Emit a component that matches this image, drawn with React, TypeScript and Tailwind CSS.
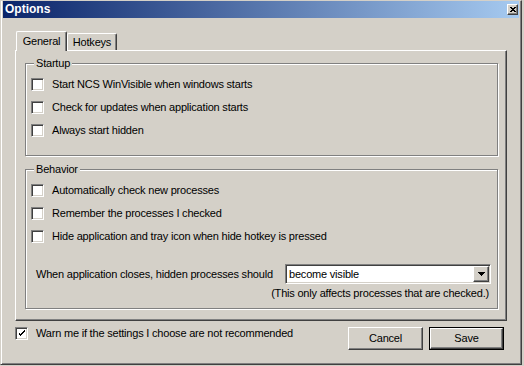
import type { ReactNode } from "react";

const raised =
  "border border-t-white border-l-white border-r-[#404040] border-b-[#404040] shadow-[inset_-1px_-1px_#808080]";
const sunken =
  "border border-t-[#808080] border-l-[#808080] border-r-white border-b-white shadow-[inset_1px_1px_#404040,inset_-1px_-1px_#d4d0c8]";

function CheckBox({ checked = false }: { checked?: boolean }) {
  return (
    <div className={`flex h-[13px] w-[13px] shrink-0 items-center justify-center bg-white ${sunken}`}>
      {checked && (
        <svg width="7" height="7" viewBox="0 0 7 7" shapeRendering="crispEdges">
          <path d="M0 2h1v3h1v1h1v-1h1v-1h1v-1h1v-1h1v-2h-1v1h-1v1h-1v1h-1v1h-1v-1h-1v-1h-1z" fill="#000" />
        </svg>
      )}
    </div>
  );
}

function CheckRow({ label, checked = false }: { label: string; checked?: boolean }) {
  return (
    <div className="flex h-[23px] items-center pl-[5px]">
      <CheckBox checked={checked} />
      <span className="ml-[8px] leading-[13px]">{label}</span>
    </div>
  );
}

function Group({ title, className, children }: { title: string; className: string; children: ReactNode }) {
  return (
    <div className={`relative border border-[#808080] shadow-[1px_1px_0_#fff,inset_1px_1px_0_#fff] ${className}`}>
      <span className="absolute left-[8px] top-[-7px] bg-[#d4d0c8] px-[2px] leading-[13px]">{title}</span>
      {children}
    </div>
  );
}

function Button({ label, primary = false }: { label: string; primary?: boolean }) {
  return (
    <div className={`h-[23px] w-[75px] ${primary ? "border border-black" : ""}`}>
      <div className={`flex h-full w-full items-center justify-center ${raised}`}>{label}</div>
    </div>
  );
}

export default function App() {
  return (
    <div className="h-[366px] w-[524px] overflow-hidden bg-[#d4d0c8] text-[11px] tracking-[-0.2px] text-black [font-family:'Liberation_Sans',Arial,sans-serif]">
      <div className="flex h-[365px] w-[522px] flex-col border border-[#d4d0c8] border-r-[#404040] border-b-[#404040] px-[2px] shadow-[inset_1px_0_#fff,inset_-1px_-1px_#808080]">
        {/* title bar */}
        <div className="flex h-[17px] items-center justify-between bg-[linear-gradient(to_right,#0a246a,#a6caf0)] pl-[2px] pr-[1px]">
          <span className="text-[12px] font-bold leading-[13px] tracking-normal text-white">Options</span>
          <div className={`flex h-[11px] w-[11px] items-center justify-center bg-[#d4d0c8] ${raised}`}>
            <svg width="6" height="5" viewBox="0 0 6 5" shapeRendering="crispEdges">
              <path d="M0 0h2v1h2v-1h2v1h-1v1h-1v1h1v1h1v1h-2v-1h-2v1h-2v-1h1v-1h1v-1h-1v-1h-1z" fill="#000" />
            </svg>
          </div>
        </div>

        <div className="flex flex-1 flex-col px-[12px]">
          {/* tabs */}
          <div className="relative z-10 mt-[13px] flex h-[19px] items-end pl-[1px]">
            <div className="mb-[-1px] flex h-[20px] w-[51px] items-center justify-center rounded-t-[2px] border-l border-t border-r border-l-white border-t-white border-r-[#404040] bg-[#d4d0c8] pb-[1px] shadow-[inset_-1px_0_#808080]">
              General
            </div>
            <div className="flex h-[17px] w-[50px] items-center justify-center rounded-t-[2px] border-l border-t border-r border-l-white border-t-white border-r-[#404040] pt-[1px] shadow-[inset_-1px_0_#808080]">
              Hotkeys
            </div>
          </div>

          {/* tab panel */}
          <div className={`flex h-[271px] flex-col pl-[9px] pr-[8px] pt-[12px] ${raised}`}>
            <Group title="Startup" className="h-[93px] pt-[9px]">
              <CheckRow label="Start NCS WinVisible when windows starts" />
              <CheckRow label="Check for updates when application starts" />
              <CheckRow label="Always start hidden" />
            </Group>

            <Group title="Behavior" className="mt-[13px] h-[140px] pt-[9px]">
              <CheckRow label="Automatically check new processes" />
              <CheckRow label="Remember the processes I checked" />
              <CheckRow label="Hide application and tray icon when hide hotkey is pressed" />
              <div className="mt-[16px] flex h-[20px] items-center pl-[10px] pr-[6px]">
                <span>When application closes, hidden processes should</span>
                <div className={`ml-auto flex h-[20px] w-[206px] items-center bg-white p-[1px] pl-[3px] ${sunken}`}>
                  <span className="flex-1 leading-[13px]">become visible</span>
                  <div className={`flex h-[16px] w-[16px] items-center justify-center bg-[#d4d0c8] ${raised}`}>
                    <svg width="7" height="4" viewBox="0 0 7 4" shapeRendering="crispEdges">
                      <path d="M0 0h7v1h-1v1h-1v1h-1v1h-1v-1h-1v-1h-1v-1h-1z" fill="#000" />
                    </svg>
                  </div>
                </div>
              </div>
              <div className="mt-[3px] pr-[8px] text-right leading-[13px]">
                (This only affects processes that are checked.)
              </div>
            </Group>
          </div>

          {/* bottom row */}
          <div className="mt-[6px] flex items-start pr-[3px]">
            <div className="flex h-[13px] items-center">
              <CheckBox checked />
              <span className="ml-[8px] leading-[13px]">Warn me if the settings I choose are not recommended</span>
            </div>
            <div className="ml-auto">
              <Button label="Cancel" />
            </div>
            <div className="ml-[6px]">
              <Button label="Save" primary />
            </div>
          </div>
        </div>
      </div>
    </div>
  );
}
